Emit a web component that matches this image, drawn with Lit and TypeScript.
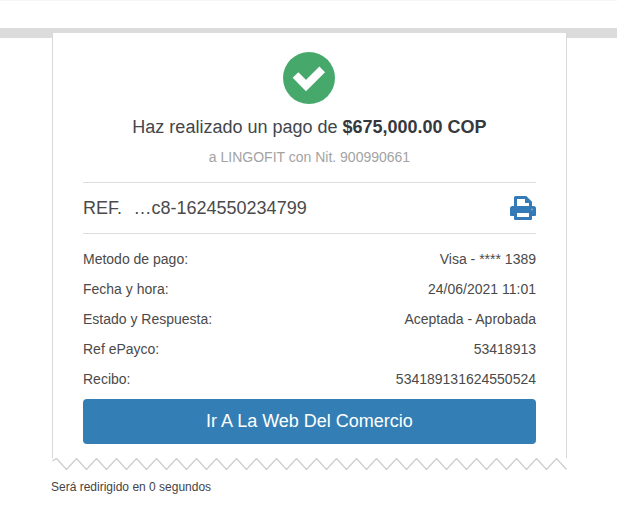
import { LitElement, css, html, svg } from 'lit';
import { customElement } from 'lit/decorators.js';

const ROWS: [string, string][] = [
  ['Metodo de pago:', 'Visa - **** 1389'],
  ['Fecha y hora:', '24/06/2021 11:01'],
  ['Estado y Respuesta:', 'Aceptada - Aprobada'],
  ['Ref ePayco:', '53418913'],
  ['Recibo:', '534189131624550524'],
];

// zigzag tail of the receipt, 20px period, peaks at x=4.5 + 20n
const zigzagPoints = (): string => {
  const pts: string[] = ['0.5,3'];
  for (let x = 4.5; x < 515; x += 10) {
    const up = Math.round((x - 4.5) / 10) % 2 === 0;
    pts.push(`${x},${up ? 0.5 : 11.5}`);
  }
  return pts.join(' ');
};

@customElement('app-root')
export class AppRoot extends LitElement {
  static styles = css`
    :host {
      display: block;
      height: 505px;
      overflow: hidden;
      background: #fff;
      font-family: 'Liberation Sans', Arial, sans-serif;
      color: #444;
    }

    .topline {
      height: 1px;
      background: #f6f6f6;
    }

    .band {
      height: 10px;
      margin-top: 27px;
      background: #dcdcdc;
    }

    .receipt {
      position: relative;
      width: 515px;
      margin: -5px 0 0 52px;
    }

    .paper {
      box-sizing: border-box;
      height: 425px;
      padding: 19px 30px 0;
      background: #fff;
      border-left: 1px solid #d8d8d8;
      border-right: 1px solid #d8d8d8;
    }

    .check {
      display: block;
      width: 53px;
      height: 52px;
      margin: 0 auto;
    }

    .title {
      margin-top: 11px;
      text-align: center;
      font-size: 18px;
      line-height: 24px;
      color: #43464b;
    }

    .title b {
      color: #35383d;
    }

    .sub {
      margin-top: 8px;
      text-align: center;
      font-size: 14px;
      line-height: 20px;
      color: #a3a3a3;
    }

    .ref {
      display: flex;
      align-items: center;
      justify-content: space-between;
      height: 50px;
      margin-top: 15px;
      border-top: 1px solid #ddd;
      border-bottom: 1px solid #ddd;
      font-size: 18px;
      color: #4a4a4a;
    }

    .ref span span {
      margin-left: 11.5px;
    }

    .printer {
      width: 26px;
      height: 24px;
    }

    .rows {
      margin-top: 10px;
    }

    .row {
      display: flex;
      justify-content: space-between;
      height: 30px;
      line-height: 30px;
      font-size: 14px;
      color: #4a4a4a;
    }

    .go {
      display: block;
      box-sizing: border-box;
      width: 100%;
      height: 45px;
      margin-top: 5px;
      border: 0;
      border-radius: 4px;
      background: #337fb5;
      color: #fff;
      font: inherit;
      font-size: 18px;
    }

    .zigzag {
      display: block;
      width: 515px;
      height: 13px;
    }

    .note {
      margin: 8px 0 0 51px;
      font-size: 12px;
      line-height: 16px;
      color: #444;
    }
  `;

  render() {
    return html`
      <div class="topline"></div>
      <div class="band"></div>
      <div class="receipt">
        <div class="paper">
          <svg class="check" viewBox="0 0 53 52">
            <circle cx="26" cy="26" r="26" fill="#46a96b"></circle>
            <path d="M12.5 23 L23 33.500 L39.200 17.300" fill="none" stroke="#fff" stroke-width="8"></path>
          </svg>
          <div class="title">Haz realizado un pago de <b>$675,000.00 COP</b></div>
          <div class="sub">a LINGOFIT con Nit. 900990661</div>
          <div class="ref">
            <span>REF.<span>…c8-1624550234799</span></span>
            <svg class="printer" viewBox="0 0 26 24">
              <path fill="#337ab7" d="M4 11V1.5A1.5 1.5 0 0 1 5.5 0h10.7l5.8 5.8V11h-3V7h-4V3H7v8z"></path>
              <path fill="#337ab7" d="M2.5 10h21a2.5 2.5 0 0 1 2.5 2.5V19a1 1 0 0 1-1 1h-3v3a1 1 0 0 1-1 1H5a1 1 0 0 1-1-1v-3H1a1 1 0 0 1-1-1v-6.500A2.500 2.500 0 0 1 2.500 10zM7 17v4h12v-4z"></path>
              <rect x="21" y="12.500" width="2" height="2" fill="#6d9fcb"></rect>
            </svg>
          </div>
          <div class="rows">
            ${ROWS.map(([label, value]) => html`<div class="row"><span>${label}</span><span>${value}</span></div>`)}
          </div>
          <button class="go" type="button">Ir A La Web Del Comercio</button>
        </div>
        <svg class="zigzag" viewBox="0 0 515 13">
          ${svg`<polyline points=${zigzagPoints()} fill="none" stroke="#cfcfcf" stroke-width="1.4"></polyline>`}
        </svg>
      </div>
      <div class="note">Será redirigido en 0 segundos</div>
    `;
  }
}
